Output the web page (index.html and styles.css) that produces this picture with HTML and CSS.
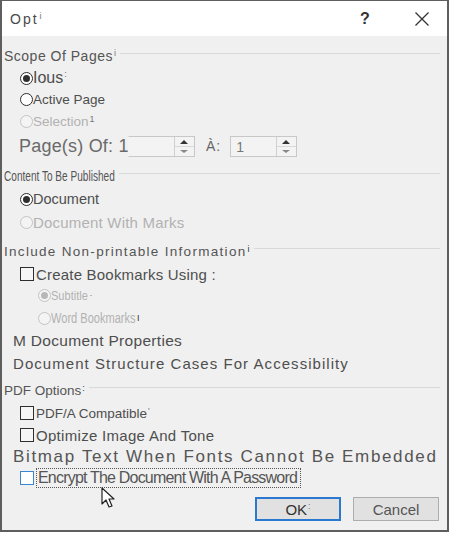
FILE: index.html
```html
<!DOCTYPE html>
<html lang="en">
<head>
    <meta charset="UTF-8">
    <title>Options</title>
    <link rel="stylesheet" href="styles.css">
</head>
<body>

<div class="window">
    <div class="titlebar">
        <span class="title">Opt<span class="tick">i</span></span>
        <span class="help">?</span>
        <svg class="close" width="16" height="16" viewBox="0 0 16 16">
            <path d="M1.5 1.5 L14.5 14.5 M14.5 1.5 L1.5 14.5" stroke="#333" stroke-width="1.3" fill="none"/>
        </svg>
    </div>

    <div class="content">
        <div class="group-title">
            <span class="title-text scope">Scope Of Pages<span class="tick">i</span></span>
            <div class="rule"></div>
        </div>
        <div class="row row-20">
            <span class="radio checked"></span><span class="lbl-16">Ious<span class="tick">:</span></span>
        </div>
        <div class="row">
            <span class="radio"></span><span class="lbl-13">Active Page</span>
        </div>
        <div class="row disabled">
            <span class="radio"></span><span class="lbl-13">Selection<span class="tick">1</span></span>
        </div>
        <div class="row row-28 pages">
            <span class="pages-label">Page(s) Of: 1</span>
            <div class="spin spin-open">
                <div class="spin-value"></div>
                <div class="spin-buttons">
                    <span class="up"></span>
                    <span class="down"></span>
                </div>
            </div>
            <span class="to-label">À:</span>
            <div class="spin">
                <div class="spin-value">1</div>
                <div class="spin-buttons">
                    <span class="up"></span>
                    <span class="down"></span>
                </div>
            </div>
        </div>

        <div class="group-title">
            <span class="title-text narrow narrow-content">Content To Be Published</span>
            <div class="rule"></div>
        </div>
        <div class="row">
            <span class="radio checked"></span><span class="lbl-15">Document</span>
        </div>
        <div class="row row-24 disabled">
            <span class="radio"></span><span class="marks">Document With Marks</span>
        </div>

        <div class="group-title tall">
            <span class="title-text spaced">Include Non-printable Information<span class="tick dark">i</span></span>
            <div class="rule"></div>
        </div>
        <div class="row row-20">
            <span class="check"></span><span class="create">Create Bookmarks Using :</span>
        </div>
        <div class="row sub disabled">
            <span class="radio dot"></span><span class="narrow narrow-subtitle">Subtitle</span><span class="tick">·</span>
        </div>
        <div class="row row-24 sub disabled">
            <span class="radio"></span><span class="narrow narrow-word">Word Bookmarks</span><span class="tick dark">I</span>
        </div>
        <div class="row plain">
            <span class="props">M Document Properties</span>
        </div>
        <div class="row plain">
            <span class="structure">Document Structure Cases For Accessibility</span>
        </div>

        <div class="group-title">
            <span class="title-text">PDF Options<span class="tick dark">:</span></span>
            <div class="rule"></div>
        </div>
        <div class="row">
            <span class="check"></span><span class="lbl-13">PDF/A Compatible<span class="tick">'</span></span>
        </div>
        <div class="row">
            <span class="check"></span><span class="optimize">Optimize Image And Tone</span>
        </div>
        <div class="row plain">
            <span class="bitmap">Bitmap Text When Fonts Cannot Be Embedded</span>
        </div>
        <div class="row row-20">
            <span class="check focus"></span><span class="focus-label">Encrypt The Document With A Password</span>
            <svg class="cursor" width="16" height="22" viewBox="0 0 16 22">
                <path d="M1 1 L1 17 L5 13 L8 20 L11 19 L8 12 L13 12 Z" fill="#fff" stroke="#222" stroke-width="1.2" stroke-linejoin="round"/>
            </svg>
        </div>

        <div class="buttons">
            <button class="btn default">OK<span class="tick">:</span></button>
            <button class="btn">Cancel</button>
        </div>
    </div>
</div>

</body>
</html>
```

FILE: styles.css
```css
body {
    margin: 0;
    padding: 0;
    font-family: 'Liberation Sans', Arial, sans-serif;
    background-color: #fff;
}

.window {
    width: 449px;
    height: 532px;
    box-sizing: border-box;
    border: 2px solid #5e5e5e;
    border-top-width: 1px;
    background-color: #f0f0f0;
    display: flex;
    flex-direction: column;
    overflow: hidden;
}

.titlebar {
    height: 35px;
    background-color: #fff;
    display: flex;
    align-items: center;
    padding: 0 0 0 8px;
    color: #4a4a4a;
}

.title {
    font-size: 14px;
    letter-spacing: 2px;
    flex: 1;
}

.help {
    font-size: 16px;
    font-weight: bold;
    color: #333;
    width: 20px;
    margin-right: 34px;
}

.close {
    margin-right: 17px;
}

.tick {
    font-size: 9px;
    color: #777;
    vertical-align: top;
    margin-left: 1px;
    letter-spacing: 0;
}

.tick.dark {
    color: #333;
}

.content {
    padding: 4px 7px 0 2px;
    color: #4e4e4e;
}

.group-title {
    height: 28px;
    display: flex;
    align-items: center;
    font-size: 13.5px;
    color: #555;
}

.group-title.tall {
    height: 30px;
}

.title-text {
    position: relative;
    top: 2px;
    white-space: nowrap;
}

.scope {
    font-size: 14px;
    letter-spacing: 0.5px;
}

.group-title .rule {
    flex: 1;
    height: 1px;
    background-color: #d9d9d9;
    margin: 0 0 2px 4px;
}

.row {
    height: 22px;
    display: flex;
    align-items: center;
    padding-left: 16px;
    position: relative;
}

.row-20 { height: 20px; }
.row-24 { height: 24px; }
.row-28 { height: 28px; }

.row.sub {
    padding-left: 34px;
}

.row.plain {
    padding-left: 9px;
}

.disabled {
    color: #b2b2b2;
}

.radio {
    width: 11px;
    height: 11px;
    border: 1.5px solid #2e2e2e;
    border-radius: 50%;
    background-color: #fff;
    position: relative;
    flex-shrink: 0;
}

.radio.checked::after {
    content: "";
    position: absolute;
    left: 2px;
    top: 2px;
    width: 7px;
    height: 7px;
    border-radius: 50%;
    background-color: #2e2e2e;
}

.disabled .radio {
    border-color: #c4c4c4;
    background-color: #f4f4f4;
}

.disabled .radio.dot::after {
    content: "";
    position: absolute;
    left: 2px;
    top: 2px;
    width: 7px;
    height: 7px;
    border-radius: 50%;
    background-color: #b8b8b8;
}

.check {
    width: 12px;
    height: 12px;
    border: 1.5px solid #2e2e2e;
    background-color: #f6f6f6;
    flex-shrink: 0;
    margin-right: 2px;
}

.check.focus {
    border-color: #3a86d0;
    background-color: #fff;
}

.lbl-13 { font-size: 13.5px; }
.lbl-15 { font-size: 14.5px; }
.lbl-16 { font-size: 16px; }

.marks { font-size: 15px; letter-spacing: 0.2px; }
.create { font-size: 15px; letter-spacing: 0.2px; }
.props { font-size: 15.5px; letter-spacing: 0.3px; }
.structure { font-size: 15px; letter-spacing: 1.05px; }
.optimize { font-size: 15px; letter-spacing: 0.3px; }

/* condensed labels: no narrow face installed, so squeeze the regular one */
.narrow {
    display: inline-block;
    transform-origin: left center;
    white-space: nowrap;
}

.narrow-content {
    font-size: 14px;
    transform: scaleX(0.72);
    margin-right: -43px;
}

.narrow-subtitle {
    font-size: 13px;
    transform: scaleX(0.85);
    margin-right: -6px;
}

.narrow-word {
    font-size: 14px;
    transform: scaleX(0.79);
    margin-right: -22px;
}

.spaced {
    letter-spacing: 1.3px;
}

.pages {
    padding-left: 15px;
}

.pages-label {
    font-size: 18px;
    letter-spacing: 0.2px;
    color: #6a6a6a;
    width: 109px;
    white-space: nowrap;
    position: relative;
    z-index: 1;
}

.spin {
    width: 67px;
    height: 21px;
    border: 1px solid #c8c8c8;
    background-color: #f3f3f3;
    display: flex;
    box-sizing: border-box;
}

.spin-open {
    border-left-color: transparent;
}

.spin-value {
    flex: 1;
    font-size: 14px;
    color: #777;
    padding: 2px 0 0 5px;
}

.spin-buttons {
    width: 19px;
    display: flex;
    flex-direction: column;
    border-left: 1px solid #d0d0d0;
}

.spin-buttons span {
    flex: 1;
    position: relative;
}

.spin-buttons .up {
    border-bottom: 1px solid #d8d8d8;
}

.spin-buttons .up::after,
.spin-buttons .down::after {
    content: "";
    position: absolute;
    left: 5px;
    width: 0;
    height: 0;
    border-left: 4px solid transparent;
    border-right: 4px solid transparent;
}

.spin-buttons .up::after {
    top: 3px;
    border-bottom: 4px solid #333;
}

.spin-buttons .down::after {
    top: 3px;
    border-top: 3px solid #888;
}

.to-label {
    font-size: 14px;
    color: #666;
    letter-spacing: 1px;
    margin: 0 9px 0 11px;
}

.bitmap {
    font-size: 17px;
    letter-spacing: 1.65px;
    color: #555;
    white-space: nowrap;
}

.focus-label {
    font-size: 16px;
    letter-spacing: -0.8px;
    color: #555;
    border: 1px dotted #555;
    padding: 0 3px 0 1px;
    line-height: 18px;
    white-space: nowrap;
}

.cursor {
    position: absolute;
    left: 97px;
    top: 19px;
}

.buttons {
    display: flex;
    justify-content: flex-end;
    gap: 12px;
    margin-top: 9px;
    padding-right: 1px;
}

.btn {
    width: 86px;
    height: 24px;
    font-family: 'Liberation Sans', Arial, sans-serif;
    font-size: 15px;
    color: #555;
    background-color: #e1e1e1;
    border: 1px solid #adadad;
    padding: 0;
}

.btn.default {
    border: 2px solid #2a78cf;
    color: #333;
}
```
